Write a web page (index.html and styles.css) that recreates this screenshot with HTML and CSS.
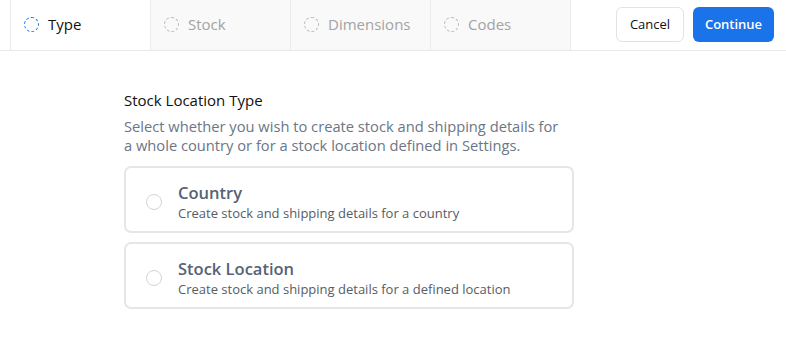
FILE: index.html
```html
<!DOCTYPE html>
<html lang="en">
  <head>
    <meta charset="UTF-8" />
    <meta name="viewport" content="width=device-width, initial-scale=1.0" />
    <title>New Stock Location</title>
    <link rel="stylesheet" href="styles.css">
  </head>
  <body>
    <header class="steps-bar">
      <nav class="steps">
        <div class="step active">
          <span class="step-dot"></span>
          <span>Type</span>
        </div>
        <div class="step">
          <span class="step-dot"></span>
          <span>Stock</span>
        </div>
        <div class="step">
          <span class="step-dot"></span>
          <span>Dimensions</span>
        </div>
        <div class="step">
          <span class="step-dot"></span>
          <span>Codes</span>
        </div>
      </nav>
      <div class="actions">
        <button class="btn btn-cancel">Cancel</button>
        <button class="btn btn-continue">Continue</button>
      </div>
    </header>

    <main class="content">
      <h2 class="section-title">Stock Location Type</h2>
      <p class="section-text">
        Select whether you wish to create stock and shipping details for
        a whole country or for a stock location defined in Settings.
      </p>

      <label class="option">
        <span class="radio"></span>
        <span class="option-body">
          <span class="option-title">Country</span>
          <span class="option-text">Create stock and shipping details for a country</span>
        </span>
      </label>

      <label class="option">
        <span class="radio"></span>
        <span class="option-body">
          <span class="option-title">Stock Location</span>
          <span class="option-text">Create stock and shipping details for a defined location</span>
        </span>
      </label>
    </main>
  </body>
</html>
```

FILE: styles.css
```css
* {
  margin: 0;
  padding: 0;
  box-sizing: border-box;
  font-family: "Open Sans", sans-serif;
}

body {
  background-color: white;
  color: #111;
}

/* Steps header */
.steps-bar {
  height: 51px;
  display: flex;
  align-items: center;
  padding-left: 10px;
  border-bottom: 1px solid #e8e8e8;
}

.steps {
  display: flex;
  height: 100%;
  border-left: 1px solid #ececec;
}

.step {
  width: 140px;
  display: flex;
  align-items: center;
  gap: 9px;
  padding-left: 13px;
  padding-bottom: 2px;
  background-color: #f9f9f9;
  border-right: 1px solid #ececec;
  color: #a3a3a3;
  font-size: 15px;
}

.step.active {
  background-color: white;
  color: #111;
}

.step-dot {
  width: 15px;
  height: 15px;
  border-radius: 50%;
  border: 1.5px dashed #b5b5b5;
}

.step.active .step-dot {
  border-color: #1a73e8;
}

.actions {
  margin-left: auto;
  display: flex;
  gap: 9px;
  padding-right: 12px;
  padding-bottom: 2px;
}

.btn {
  height: 35px;
  border-radius: 6px;
  font-size: 13px;
  font-weight: 600;
  cursor: pointer;
}

.btn-cancel {
  width: 68px;
  background: white;
  border: 1px solid #e3e3e3;
  color: #111;
  font-weight: 500;
}

.btn-continue {
  width: 81px;
  background-color: #1a73e8;
  border: none;
  color: white;
}

/* Content */
.content {
  width: 450px;
  margin-left: 124px;
  padding-top: 39px;
}

.section-title {
  font-size: 15px;
  font-weight: 500;
  line-height: 20px;
  color: #111;
}

.section-text {
  max-width: 440px;
  margin-top: 7px;
  font-size: 14.7px;
  line-height: 19px;
  color: #6b7686;
}

.option {
  display: flex;
  align-items: center;
  height: 67px;
  margin-top: 9px;
  padding-left: 20px;
  padding-top: 4px;
  border: 2px solid #e6e6e6;
  border-radius: 7px;
  cursor: pointer;
}

.section-text + .option {
  margin-top: 11px;
}

.radio {
  width: 16px;
  height: 16px;
  border-radius: 50%;
  border: 1px solid #d4d4d4;
  flex-shrink: 0;
}

.option-body {
  display: flex;
  flex-direction: column;
  margin-left: 16px;
}

.option-title {
  font-size: 16.5px;
  font-weight: 600;
  line-height: 22px;
  color: #556275;
}

.option-text {
  font-size: 13px;
  line-height: 18px;
  color: #555c66;
}
```
